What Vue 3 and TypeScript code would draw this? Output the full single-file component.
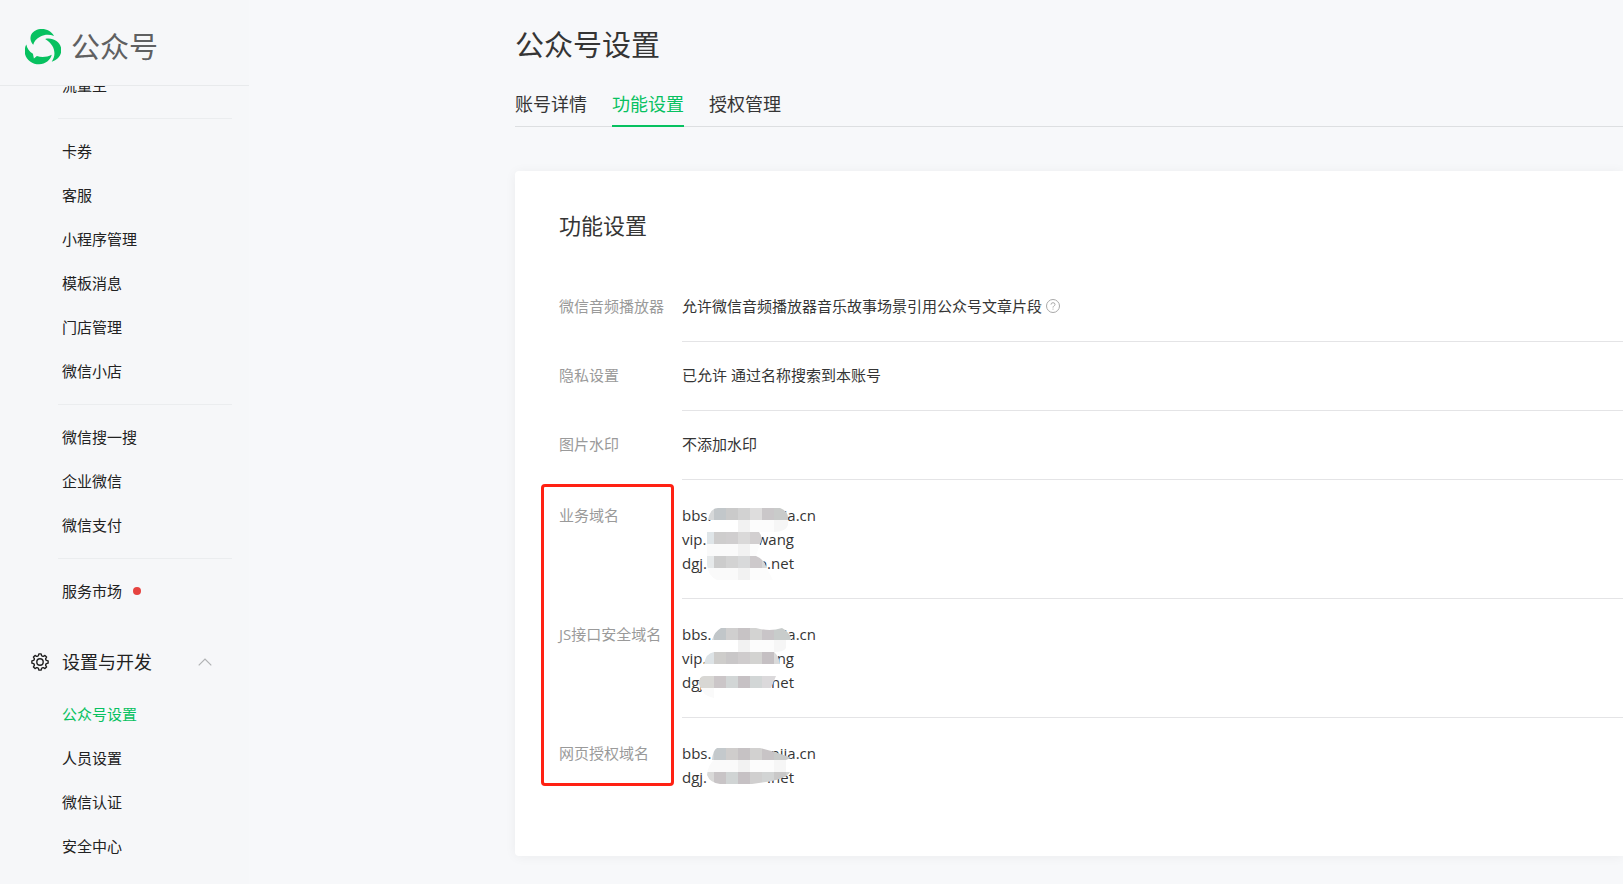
<script setup lang="ts">
interface NavItem { label: string; dot?: boolean; active?: boolean }
interface Tab { label: string; active?: boolean }
interface PlainRow { label: string; value: string; help?: boolean }
interface DomainLine { start: string; end: string; wide?: boolean }
interface Cell { x: number; y: number; w: number; c: string }
interface DomainRow { label: string; lines: DomainLine[]; clip: string; cells: Cell[] }

const navGroups: NavItem[][] = [
  [{ label: '流量主' }],
  [
    { label: '卡券' },
    { label: '客服' },
    { label: '小程序管理' },
    { label: '模板消息' },
    { label: '门店管理' },
    { label: '微信小店' },
  ],
  [{ label: '微信搜一搜' }, { label: '企业微信' }, { label: '微信支付' }],
  [{ label: '服务市场', dot: true }],
]
const settings: NavItem[] = [
  { label: '公众号设置', active: true },
  { label: '人员设置' },
  { label: '微信认证' },
  { label: '安全中心' },
]
const tabs: Tab[] = [
  { label: '账号详情' },
  { label: '功能设置', active: true },
  { label: '授权管理' },
]
const plainRows: PlainRow[] = [
  { label: '微信音频播放器', value: '允许微信音频播放器音乐故事场景引用公众号文章片段', help: true },
  { label: '隐私设置', value: '已允许 通过名称搜索到本账号' },
  { label: '图片水印', value: '不添加水印' },
]

// Eight rounded teeth around the gear's centre.
const gearPath = ((): string => {
  const at = (r: number, deg: number): string => {
    const a = (deg * Math.PI) / 180
    return `${(9 + r * Math.sin(a)).toFixed(2)} ${(9 - r * Math.cos(a)).toFixed(2)}`
  }
  const parts: string[] = []
  for (let i = 0; i < 8; i++) {
    const d = i * 45
    parts.push(`${i ? 'L' : 'M'}${at(8.2, d - 8)}L${at(8.2, d + 8)}L${at(6.6, d + 14)}Q${at(5.9, d + 22.5)} ${at(6.6, d + 31)}`)
  }
  return parts.join('') + 'Z'
})()

const band = (x: number, y: number, colors: string): Cell[] =>
  colors.split(' ').map((c, i) => ({ x: x + i * 12, y, w: 12, c: '#' + c }))
const veil = (y: number): Cell[] => [
  { x: 8, y, w: 48, c: '#fafafa' },
  { x: 56, y, w: 12, c: '#f2f2f2' },
  { x: 68, y, w: 24, c: '#fcfcfc' },
  { x: 92, y, w: 18, c: '#f6f6f6' },
]

const domainRows: DomainRow[] = [
  {
    label: '业务域名',
    lines: [
      { start: 'bbs.', end: 'jia.cn', wide: true },
      { start: 'vip.', end: 'wang' },
      { start: 'dgj.', end: 'o.net' },
    ],
    clip: 'M26 17Q28 5 36 5H98Q106 8 106 15V22Q104 29 92 29H77Q82 35 78 41L74 53Q82 56 84 63L91 77H35Q26 73 25 62V29H56V17Z',
    cells: [
      ...band(20, 5, 'd6d8d9 c2c7ca cacaca d2d2d2 dedddd cac7c9 c9cbca c9cbca'),
      ...veil(17),
      ...band(20, 29, 'dfe5e8 cecdcd d0cecf dad9d9 d2cfd0 d8d8d6'),
      ...veil(41),
      ...band(20, 53, 'e6e9ea cccccc d3d3d3 d8d9da cdc9cb d6d8d8'),
      ...veil(65),
    ],
  },
  {
    label: 'JS接口安全域名',
    lines: [
      { start: 'bbs.', end: 'jia.cn', wide: true },
      { start: 'vip.', end: 'ang' },
      { start: 'dgj.', end: '.net' },
    ],
    clip: 'M30 18Q33 9 39 6H74Q88 10 100 6Q108 10 109 18H104V26Q102 30 92 30Q97 34 98 42H56V54H94L89 66H32V76Q20 74 17 62Q17 54 22 54H56V42H22Q24 31 32 30H56V18Z',
    cells: [
      ...band(20, 6, 'd5d8d9 c1c6c9 d0cfcf c7c3c5 d3d3d2 c9c5c8 c8cccb c8cccb'),
      ...veil(18),
      ...band(20, 30, 'dde3e6 cecdcb c9c7c8 cfcccd d3d3d1 c5c0c3 dadada'),
      ...band(8, 54, 'd8d7d4 d8d7d4 cbc6c8 d2d6d6 c6c1c4 d2d6d6 dbd9db dbd9db'),
      ...veil(66),
    ],
  },
  {
    label: '网页授权域名',
    lines: [
      { start: 'bbs.', end: 'njia.cn', wide: true },
      { start: 'dgj.', end: '.net' },
    ],
    clip: 'M30 19Q31 9 35 7H78Q98 12 109 17L104 19V31H108Q104 38 84 41L70 43H38Q28 42 25 34Q26 24 32 19Z',
    cells: [
      ...band(20, 7, 'd0d4d6 c4c9cc cfcdcc c6c2c4 d2d1d0 c8c4c6 c8cac9 c8cac9'),
      ...veil(19),
      ...band(20, 31, 'd9d9d8 c8c4c6 d0d4d4 c6c1c4 d0cfcf d2d4d4 c9c8c8 cfd1d1'),
    ],
  },
]
</script>

<template>
  <div class="page">
    <aside class="sidebar">
      <header class="brand">
        <svg class="logo" viewBox="15 20 109 109" aria-hidden="true">
          <path d="M40 68C32 60 29 48 34 37C40 26 52 20 66 20C82 20 95 27 103 41C90 36 74 36 62 43C49 50 42 58 40 68Z" />
          <path d="M76 50C100 44 125 60 125 84C125 100 114 114 96 119C112 96 104 66 76 50Z" />
          <path d="M19 67C21 79 28 89 39 95L42 109L51 102C66 107 82 105 96 98C92 114 77 126 58 127C35 127 14 110 14 87C14 79 16 72 19 67Z" />
        </svg>
        <span class="brand-name">公众号</span>
      </header>
      <nav class="nav">
        <div class="nav-scroll">
          <ul v-for="(group, g) in navGroups" :key="g" class="group">
            <li v-for="item in group" :key="item.label">
              <a href="#" class="nav-link">{{ item.label }}<i v-if="item.dot" class="dot"></i></a>
            </li>
          </ul>
          <button type="button" class="section">
            <svg class="gear" viewBox="0 0 18 18" aria-hidden="true">
              <path :d="gearPath" />
              <circle cx="9" cy="9" r="3.200" />
            </svg>
            <span>设置与开发</span>
            <svg class="chevron" viewBox="0 0 14 8" aria-hidden="true"><path d="M.7 7.300L7 1L13.300 7.300" /></svg>
          </button>
          <ul class="group">
            <li v-for="item in settings" :key="item.label">
              <a href="#" class="nav-link" :class="{ active: item.active }">{{ item.label }}</a>
            </li>
          </ul>
        </div>
      </nav>
    </aside>

    <main class="main">
      <h1>公众号设置</h1>
      <nav class="tabs">
        <a v-for="tab in tabs" :key="tab.label" href="#" class="tab" :class="{ active: tab.active }">{{ tab.label }}</a>
      </nav>
      <section class="card">
        <h2>功能设置</h2>
        <dl class="plain">
          <div v-for="row in plainRows" :key="row.label" class="row">
            <dt>{{ row.label }}</dt>
            <dd>
              <span>{{ row.value }}</span>
              <button v-if="row.help" type="button" class="help" aria-label="帮助">
                <svg viewBox="0 0 14 14" aria-hidden="true">
                  <circle cx="7" cy="7" r="6.500" />
                  <path d="M5 5.600Q5 3.700 7 3.700T9 5.500Q9 6.500 7.800 7.100Q7 7.600 7 8.600M7 9.600V10.600" />
                </svg>
              </button>
            </dd>
          </div>
        </dl>
        <dl class="domains">
          <div v-for="(row, r) in domainRows" :key="row.label" class="row">
            <dt>{{ row.label }}</dt>
            <dd class="domain-list">
              <span v-for="line in row.lines" :key="line.start" class="domain" :class="{ wide: line.wide }">
                <span>{{ line.start }}</span><span>{{ line.end }}</span>
              </span>
              <svg class="mosaic" viewBox="0 0 134 80" aria-hidden="true">
                <clipPath :id="`brush-${r}`"><path :d="row.clip" /></clipPath>
                <g :clip-path="`url(#brush-${r})`" shape-rendering="crispEdges">
                  <rect v-for="(cell, i) in row.cells" :key="i" :x="cell.x" :y="cell.y" :width="cell.w" height="12" :fill="cell.c" />
                </g>
              </svg>
            </dd>
          </div>
          <div class="highlight"></div>
        </dl>
      </section>
    </main>
  </div>
</template>

<style>
body { margin: 0; background: #f7f8fa; }
</style>

<style scoped>
.page {
  display: flex;
  height: 100vh;
  overflow: hidden;
  background: #f7f8fa;
  color: #353535;
  font-family: "Open Sans", "Noto Sans CJK SC", sans-serif;
  font-size: 15px;
  line-height: 24px;
}
ul, dl, dd, h1, h2 { margin: 0; padding: 0; font-weight: 400; }
li { list-style: none; }
a { color: inherit; text-decoration: none; }
button { border: 0; padding: 0; background: none; color: inherit; font: inherit; }

.sidebar {
  flex: 0 0 249px;
  display: flex;
  flex-direction: column;
  background: #f6f7f9;
  color: #222;
}
.brand {
  display: flex;
  align-items: center;
  gap: 10px;
  height: 86px;
  padding: 8px 0 0 25px;
  box-sizing: border-box;
  border-bottom: 1px solid #e8eaec;
}
.logo { width: 36px; height: 36px; fill: #07c160; }
.brand-name { font-size: 29px; line-height: 40px; color: #5f6061; }
.nav { flex: 1; min-height: 0; overflow: hidden; }
.nav-scroll { margin-top: -22px; }
.group + .group::before {
  content: "";
  display: block;
  height: 1px;
  margin: 10px 17px 11px 58px;
  background: #ebedef;
}
.nav-link {
  display: flex;
  align-items: center;
  height: 44px;
  padding: 0 0 2px 62px;
  box-sizing: border-box;
}
.nav-link.active { color: #07c160; }
.dot { width: 8px; height: 8px; margin-left: 11px; border-radius: 50%; background: #e64340; }
.section {
  display: flex;
  align-items: center;
  width: 100%;
  height: 48px;
  margin: 24px 0 7px;
  padding: 0 37px 0 31px;
  box-sizing: border-box;
  font-size: 18px;
}
.gear { width: 18px; height: 18px; margin-right: 13px; fill: none; stroke: #222; stroke-width: 1.400; stroke-linejoin: round; }
.chevron { width: 14px; height: 8px; margin-left: auto; fill: none; stroke: #b0b2b4; stroke-width: 1.200; }

.main { flex: 1; min-width: 0; padding: 25px 0 0 266px; }
h1 { font-size: 29px; line-height: 40px; }
.tabs { display: flex; gap: 25px; margin-top: 18px; border-bottom: 1px solid #dddfe1; }
.tab { height: 42px; margin-bottom: -1px; border-bottom: 2px solid transparent; font-size: 18px; line-height: 42px; }
.tab.active { border-color: #07c160; color: #07c160; }
.card {
  margin-top: 44px;
  padding: 38px 0 67px 44px;
  border-radius: 4px 0 0 4px;
  background: #fff;
  box-shadow: 0 1px 12px rgba(0, 0, 0, 0.05);
}
h2 { margin-bottom: 32px; font-size: 22px; line-height: 32px; }
.row { display: flex; }
dt { flex: 0 0 123px; color: #9a9a9a; white-space: nowrap; }
dd { flex: 1; display: flex; align-items: center; border-bottom: 1px solid #e4e4e6; }
.plain dt, .plain dd { padding: 21px 0 23px; }
.help { display: flex; margin-left: 4px; }
.help svg { width: 14px; height: 14px; fill: none; stroke: #a8a8a8; }
.domains { position: relative; }
.domains dt, .domains dd { padding: 23px 0; }
.domains .row:nth-last-child(2) dd { border-bottom: 0; padding-bottom: 0; }
.domains .row:nth-last-child(2) dt { padding-bottom: 0; }
.domain-list { position: relative; flex-direction: column; align-items: flex-start; }
.domain { display: flex; justify-content: space-between; width: 112px; }
.domain.wide { width: 134px; }
.mosaic { position: absolute; left: 0; top: 23px; width: 134px; height: 80px; }
.highlight {
  position: absolute;
  left: -18px;
  top: 4px;
  bottom: 3px;
  width: 133px;
  box-sizing: border-box;
  border: 3px solid #ff2113;
  border-radius: 4px;
}
</style>
